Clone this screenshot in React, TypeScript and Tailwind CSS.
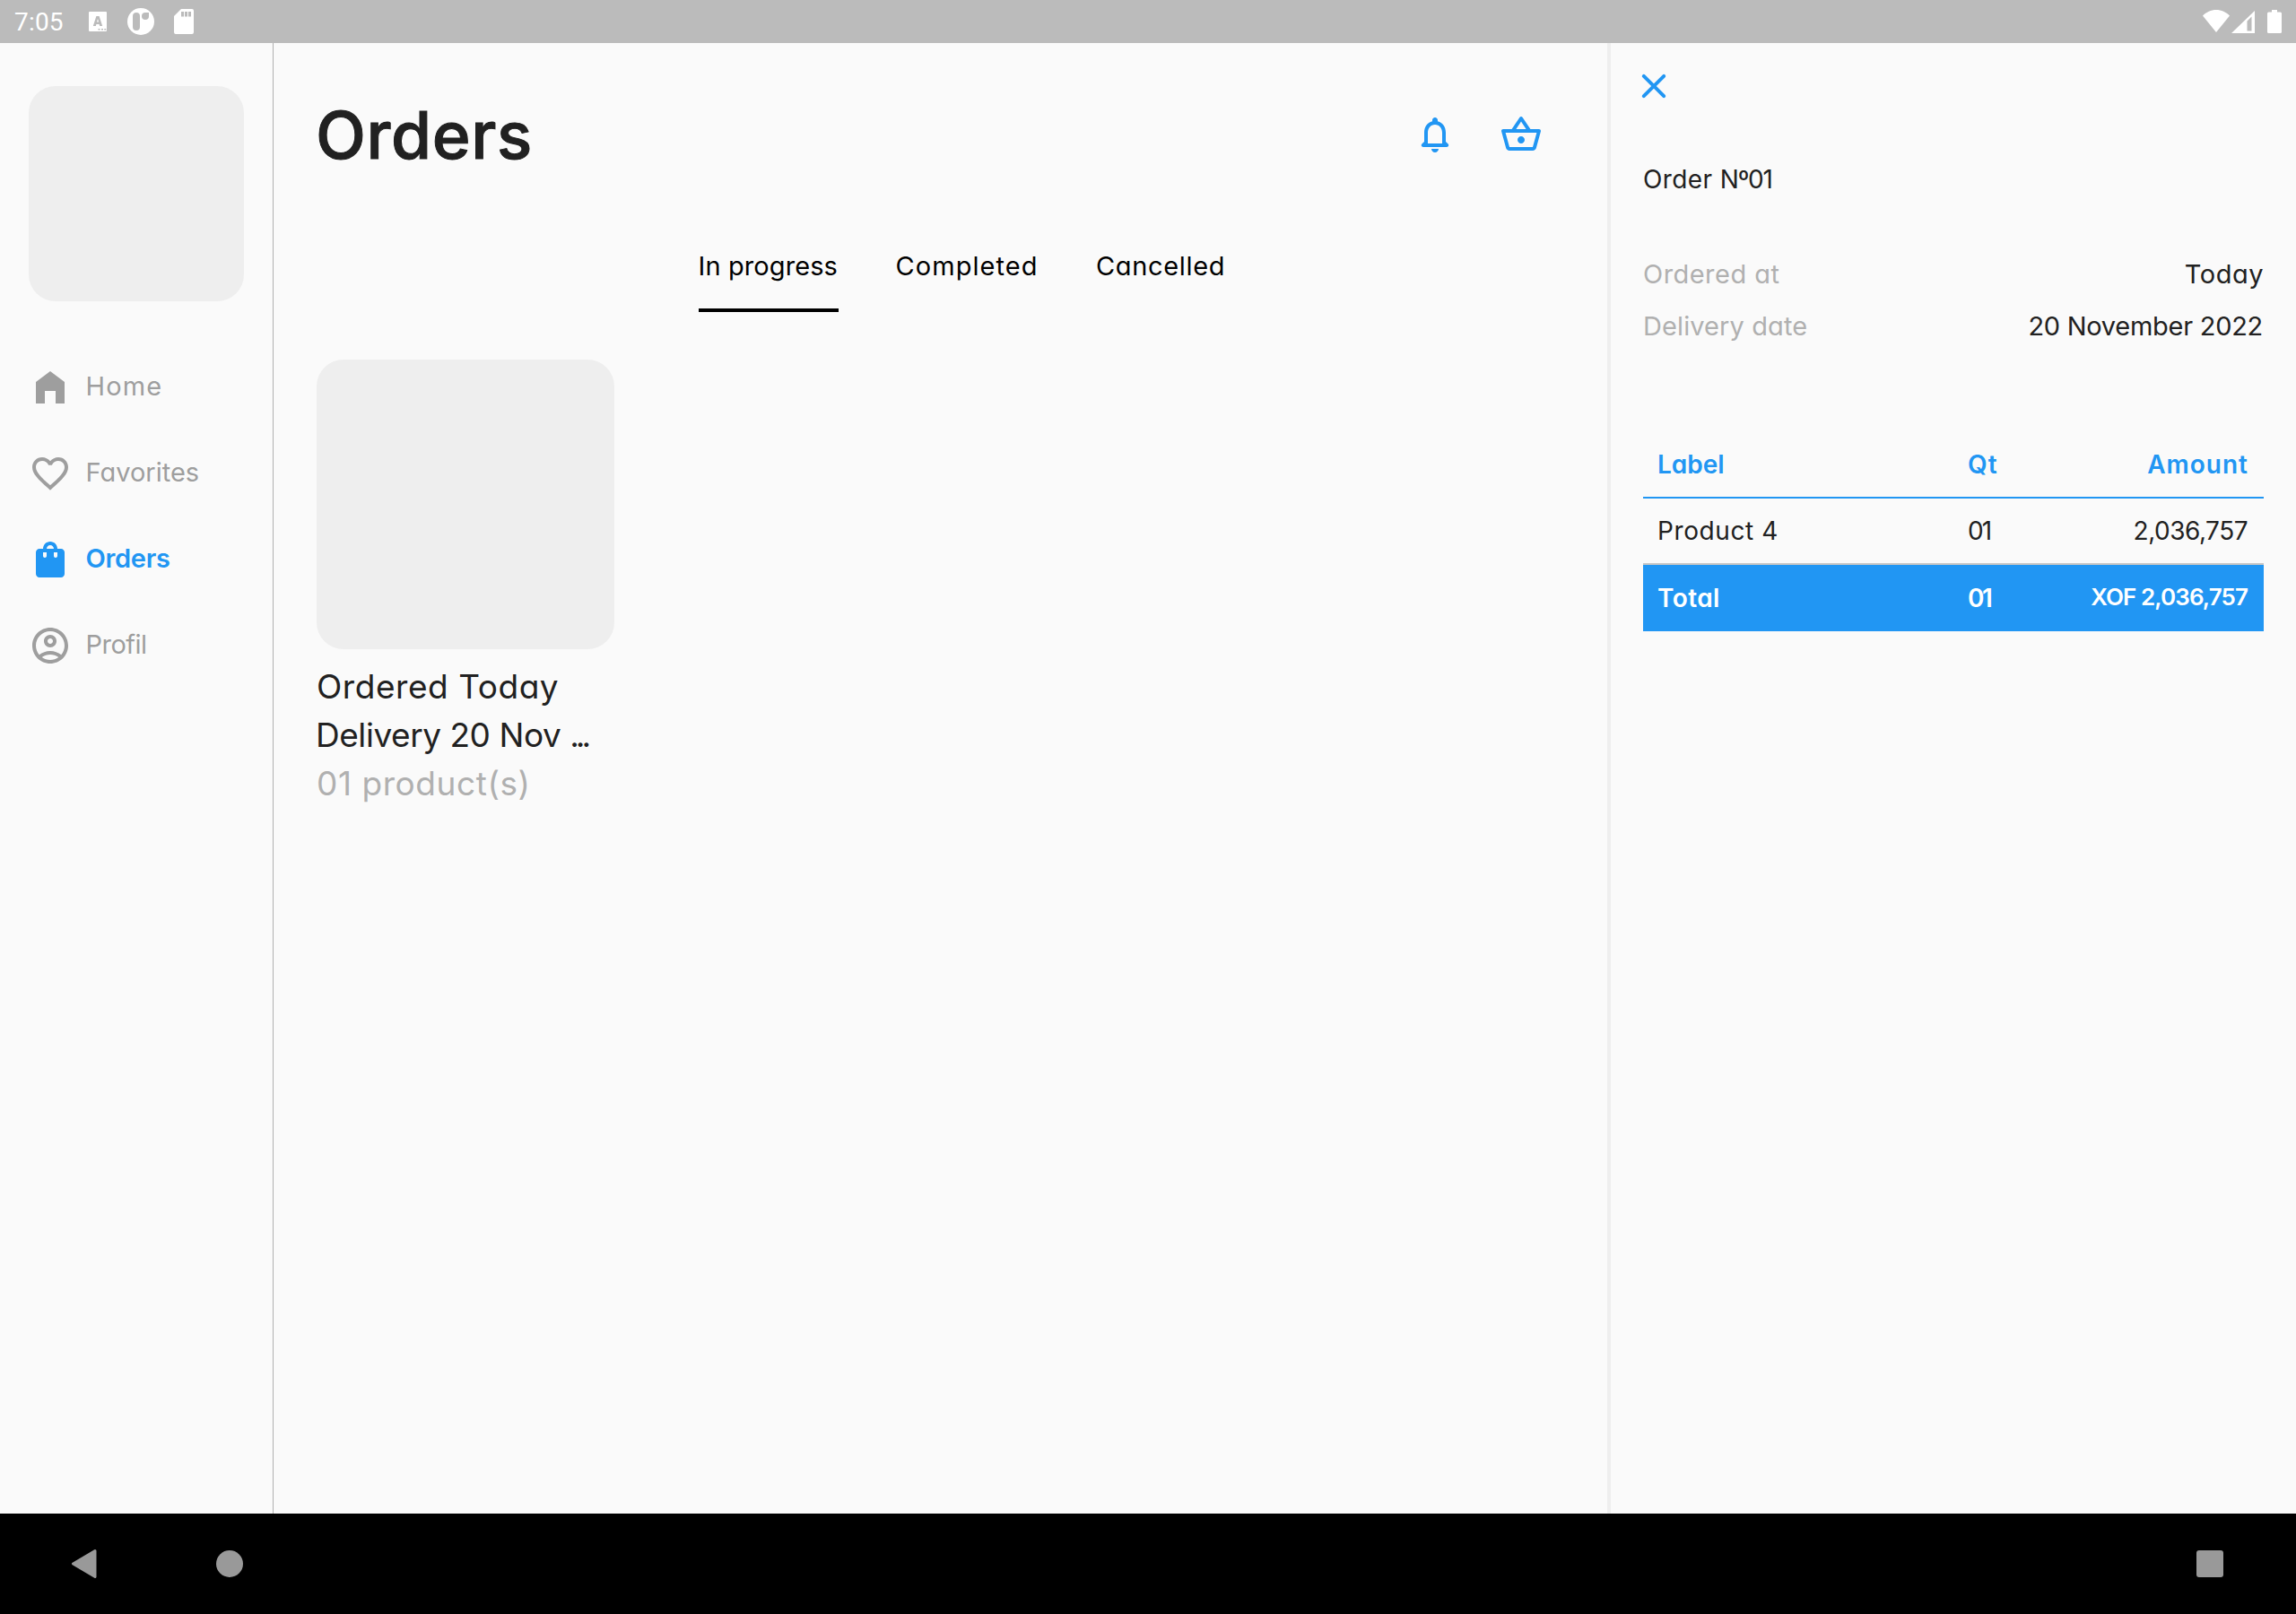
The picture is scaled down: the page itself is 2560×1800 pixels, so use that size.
import type { ReactNode } from "react";

const HOME = "M12 3L4 9v12h5v-7h6v7h5V9z";
const HEART =
  "M16.5 3c-1.74 0-3.41.81-4.5 2.09C10.91 3.81 9.24 3 7.5 3 4.42 3 2 5.42 2 8.5c0 3.78 3.4 6.86 8.55 11.54L12 21.35l1.45-1.32C18.6 15.36 22 12.28 22 8.5 22 5.42 19.58 3 16.5 3zm-4.4 15.55l-.1.1-.1-.1C7.14 14.24 4 11.39 4 8.5 4 6.5 5.5 5 7.5 5c1.54 0 3.04.99 3.57 2.36h1.87C13.46 5.99 14.96 5 16.5 5c2 0 3.5 1.5 3.5 3.5 0 2.89-3.14 5.74-7.9 10.05z";
const BAG =
  "M18 6h-2c0-2.21-1.79-4-4-4S8 3.79 8 6H6c-1.1 0-2 .9-2 2v12c0 1.1.9 2 2 2h12c1.1 0 2-.9 2-2V8c0-1.1-.9-2-2-2zm-8 4c0 .55-.45 1-1 1s-1-.45-1-1V8h2v2zm2-6c1.1 0 2 .9 2 2h-4c0-1.1.9-2 2-2zm4 6c0 .55-.45 1-1 1s-1-.45-1-1V8h2v2z";
const ACCOUNT =
  "M12 2C6.48 2 2 6.48 2 12s4.48 10 10 10 10-4.48 10-10S17.52 2 12 2zM7.35 18.5C8.66 17.56 10.26 17 12 17s3.34.56 4.65 1.5C15.34 19.44 13.74 20 12 20s-3.34-.56-4.65-1.5zm10.79-1.38C16.45 15.8 14.32 15 12 15s-4.45.8-6.14 2.12C4.7 15.73 4 13.95 4 12c0-4.42 3.58-8 8-8s8 3.58 8 8c0 1.95-.7 3.73-1.86 5.12zM12 6c-1.93 0-3.5 1.57-3.5 3.5S10.07 13 12 13s3.5-1.57 3.5-3.5S13.93 6 12 6zm0 5c-.83 0-1.5-.67-1.5-1.5S11.17 8 12 8s1.5.67 1.5 1.5S12.83 11 12 11z";
const BELL =
  "M19.29 17.29L18 16v-5c0-3.07-1.64-5.64-4.5-6.32V4c0-.83-.67-1.5-1.5-1.5s-1.5.67-1.5 1.5v.68C7.63 5.36 6 7.92 6 11v5l-1.29 1.29c-.63.63-.19 1.71.7 1.71h13.17c.9 0 1.34-1.08.71-1.71zM16 17H8v-6c0-2.48 1.51-4.5 4-4.5s4 2.02 4 4.5v6zm-4 5c1.1 0 2-.9 2-2h-4c0 1.1.89 2 2 2z";
const BASKET =
  "M22 9h-4.79l-4.38-6.56c-.19-.28-.51-.42-.83-.42s-.64.14-.83.43L6.79 9H2c-.55 0-1 .45-1 1 0 .09.01.18.04.27l2.54 9.27c.23.84 1 1.46 1.92 1.46h13c.92 0 1.69-.62 1.93-1.46l2.54-9.27L23 10c0-.55-.45-1-1-1zM12 4.8L14.8 9H9.2L12 4.8zM18.5 19l-12.99.01L3.31 11H20.7l-2.2 8zM12 13c-1.1 0-2 .9-2 2s.9 2 2 2 2-.9 2-2-.9-2-2-2z";
const CLOSE =
  "M18.3 5.71c-.39-.39-1.02-.39-1.41 0L12 10.59 7.11 5.7c-.39-.39-1.02-.39-1.41 0-.39.39-.39 1.02 0 1.41L10.59 12 5.7 16.89c-.39.39-.39 1.02 0 1.41.39.39 1.02.39 1.41 0L12 13.41l4.89 4.89c.39.39 1.02.39 1.41 0 .39-.39.39-1.02 0-1.41L13.41 12l4.89-4.89c.38-.38.38-1.02 0-1.4z";

function Icon({ path }: { path: string }) {
  return (
    <svg viewBox="0 0 24 24" className="size-12 shrink-0 fill-current">
      <path d={path} />
    </svg>
  );
}

function StatusBar() {
  return (
    <header className="flex h-12 shrink-0 items-center justify-between bg-[#bbbbbb] pr-4 pl-4 text-white">
      <div className="flex h-12 items-center">
        <span className="w-[83px] pt-[2px] font-['Roboto'] text-[28px] leading-[46px] tracking-[0.2px]">7:05</span>
        <svg viewBox="0 0 20 22" className="h-[22px] w-5">
          <path
            fill="#fff"
            fillRule="evenodd"
            d="M1 0h18a1 1 0 011 1v20a1 1 0 01-1 1H1a1 1 0 01-1-1V1a1 1 0 011-1zM8.400 5L4.8 16h3l.6-2h3.200l.6 2h3L11.600 5zM10 8l1 3.600H9zM10.5 19h2v1.6h-2zM14 19h2v1.6h-2zM17.3 19h2v1.6h-2z"
          />
        </svg>
        <svg viewBox="0 0 30 30" className="ml-[23px] size-[30px]">
          <circle cx="15" cy="15" r="15" fill="#fff" />
          <rect x="6" y="5" width="8" height="20" rx="4" fill="#bbbbbb" />
          <path d="M20 5h4v4a4 4 0 11-8 0 4 4 0 014-4z" fill="#bbbbbb" />
        </svg>
        <svg viewBox="0 0 22 28" className="ml-[22px] h-7 w-[22px]">
          <path
            fill="#fff"
            fillRule="evenodd"
            d="M8 0h12a2 2 0 012 2v24a2 2 0 01-2 2H2a2 2 0 01-2-2V8zM8 3v5.5h3V3zm4 0v5.5h3V3zm4 0v5.5h3V3z"
          />
        </svg>
      </div>
      <div className="flex h-12 items-center">
        <svg viewBox="0 0 30 25" className="mt-[-1px] h-[25px] w-[30px] fill-white">
          <path d="M15 25L0 6.5C4 2.6 9.200 0 15 0s11 2.600 15 6.500z" />
        </svg>
        <svg viewBox="0 0 26 25" className="ml-[2px] h-[25px] w-[26px] fill-white">
          <path fillRule="evenodd" d="M0 25L26 0v25zM17.500 11.500v11h5V6.500z" />
        </svg>
        <svg viewBox="0 0 16 26" className="ml-[14px] h-[26px] w-4 fill-white">
          <path d="M5 0h6v2.500h3.500A1.500 1.500 0 0116 4v20.500a1.500 1.500 0 01-1.500 1.500h-13A1.500 1.500 0 010 24.500V4a1.500 1.500 0 011.500-1.500H5z" />
        </svg>
      </div>
    </header>
  );
}

function NavItem({ path, className, children }: { path: string; className: string; children: ReactNode }) {
  return (
    <li className={`flex h-12 items-center ${className}`}>
      <Icon path={path} />
      <span className="ml-[15.5px] pb-[2px] leading-10">{children}</span>
    </li>
  );
}

function Sidebar() {
  return (
    <nav className="w-[305px] shrink-0 border-r border-[#b0b0b0] px-8 pt-12 text-[#9e9e9e]">
      <div className="size-60 rounded-[30px] bg-[#eeeeee]" />
      <ul className="mt-[72px] flex flex-col gap-12 text-[29px]">
        <NavItem path={HOME} className="tracking-[1.1px]">Home</NavItem>
        <NavItem path={HEART} className="tracking-[0px]">Favorites</NavItem>
        <NavItem path={BAG} className="font-[600] tracking-[-0.3px] text-[#2196f3]">Orders</NavItem>
        <NavItem path={ACCOUNT} className="tracking-[-0.5px]">Profil</NavItem>
      </ul>
    </nav>
  );
}

function Orders() {
  return (
    <main className="flex min-w-0 flex-1 flex-col pl-[47px]">
      <div className="mt-12 flex h-[108px] items-center justify-between pr-[72px]">
        <h1 className="pt-px text-[73px] leading-[106px] font-[500] tracking-[0.6px] text-[#212121] [-webkit-text-stroke:1px_#212121]">
          Orders
        </h1>
        <div className="flex gap-12 text-[#2196f3]">
          <Icon path={BELL} />
          <Icon path={BASKET} />
        </div>
      </div>
      <div className="mt-11 ml-[426.5px] flex h-[100px] gap-16 pt-7 text-[29px] leading-[42px] text-black">
        <div className="w-[156px] border-b-4 border-black tracking-[0.1px] whitespace-nowrap">In progress</div>
        <div className="w-[159.500px] tracking-[1.05px] whitespace-nowrap">Completed</div>
        <div className="tracking-[0.65px] whitespace-nowrap">Cancelled</div>
      </div>
      <article className="mt-[53px] w-[333px] text-[37px] leading-[54px] whitespace-nowrap text-[#212121]">
        <div className="ml-px h-[323px] rounded-[30px] bg-[#eeeeee]" />
        <p className="mt-[15px] ml-px tracking-[0.55px]">Ordered Today</p>
        <p className="tracking-[-0.45px]">
          Delivery 20 Nov <span className="tracking-[-4px]">...</span>
        </p>
        <p className="ml-px tracking-[0.57px] text-[#b0b0b0]">01 product(s)</p>
      </article>
    </main>
  );
}

function OrderPanel() {
  return (
    <aside className="w-[768px] shrink-0 border-l-4 border-[#eeeeee] pr-9 pl-9 text-[28px] leading-[42px] whitespace-nowrap text-[#212121]">
      <button className="mt-6 ml-[-12px] block text-[#2196f3]">
        <Icon path={CLOSE} />
      </button>
      <h2 className="mt-[59px]">
        <span className="tracking-[0.4px]">Order </span>
        <span className="tracking-[-1.2px]">Nº01</span>
      </h2>
      <dl className="mt-[64px] flex flex-col gap-4 text-[29px]">
        <div className="flex justify-between">
          <dt className="tracking-[0.46px] text-[#b0b0b0]">Ordered at</dt>
          <dd className="tracking-[0.5px]">Today</dd>
        </div>
        <div className="flex justify-between">
          <dt className="tracking-[0.1px] text-[#b0b0b0]">Delivery date</dt>
          <dd className="mr-px tracking-[-0.27px]">20 November 2022</dd>
        </div>
      </dl>
      <div className="mt-[97px] grid grid-cols-[362px_1fr_auto] items-center">
        <div className="col-span-3 grid h-[74px] grid-cols-subgrid items-center border-b-2 border-[#2196f3] px-4 font-[600] text-[#2196f3]">
          <span>Label</span>
          <span className="tracking-[1px]">Qt</span>
          <span className="pr-px text-right tracking-[1px]">Amount</span>
        </div>
        <div className="col-span-3 grid h-[74px] grid-cols-subgrid items-center border-b-2 border-[#c6c6c6] px-4">
          <span className="tracking-[0.6px]">Product 4</span>
          <span className="tracking-[-1.8px]">01</span>
          <span className="pr-[2px] text-right tracking-[-0.5px]">2,036,757</span>
        </div>
        <div className="col-span-3 grid h-[74px] grid-cols-subgrid items-center bg-[#2196f3] px-4 font-[600] text-white">
          <span className="pb-[1px] tracking-[0.4px]">Total</span>
          <span className="pb-[1px] tracking-[-2.500px]">01</span>
          <span className="pr-[2px] pb-[3px] text-right text-[26px] tracking-[-0.9px]">XOF 2,036,757</span>
        </div>
      </div>
    </aside>
  );
}

function SystemNav() {
  return (
    <footer className="flex h-28 shrink-0 items-center bg-black pr-[81px] pl-20">
      <svg viewBox="0 0 28 32" className="h-8 w-7">
        <path d="M26 1.500L1.500 16 26 30.500z" fill="#999999" stroke="#999999" strokeWidth="3" strokeLinejoin="round" />
      </svg>
      <div className="ml-[133px] size-[30px] rounded-full bg-[#999999]" />
      <div className="ml-auto size-[30px] rounded-[3px] bg-[#999999]" />
    </footer>
  );
}

export default function App() {
  return (
    <div className="flex h-[1800px] w-[2560px] flex-col overflow-hidden bg-[#fafafa] font-['Inter',sans-serif] font-normal [font-feature-settings:'cv11']">
      <StatusBar />
      <div className="flex min-h-0 flex-1">
        <Sidebar />
        <Orders />
        <OrderPanel />
      </div>
      <SystemNav />
    </div>
  );
}
